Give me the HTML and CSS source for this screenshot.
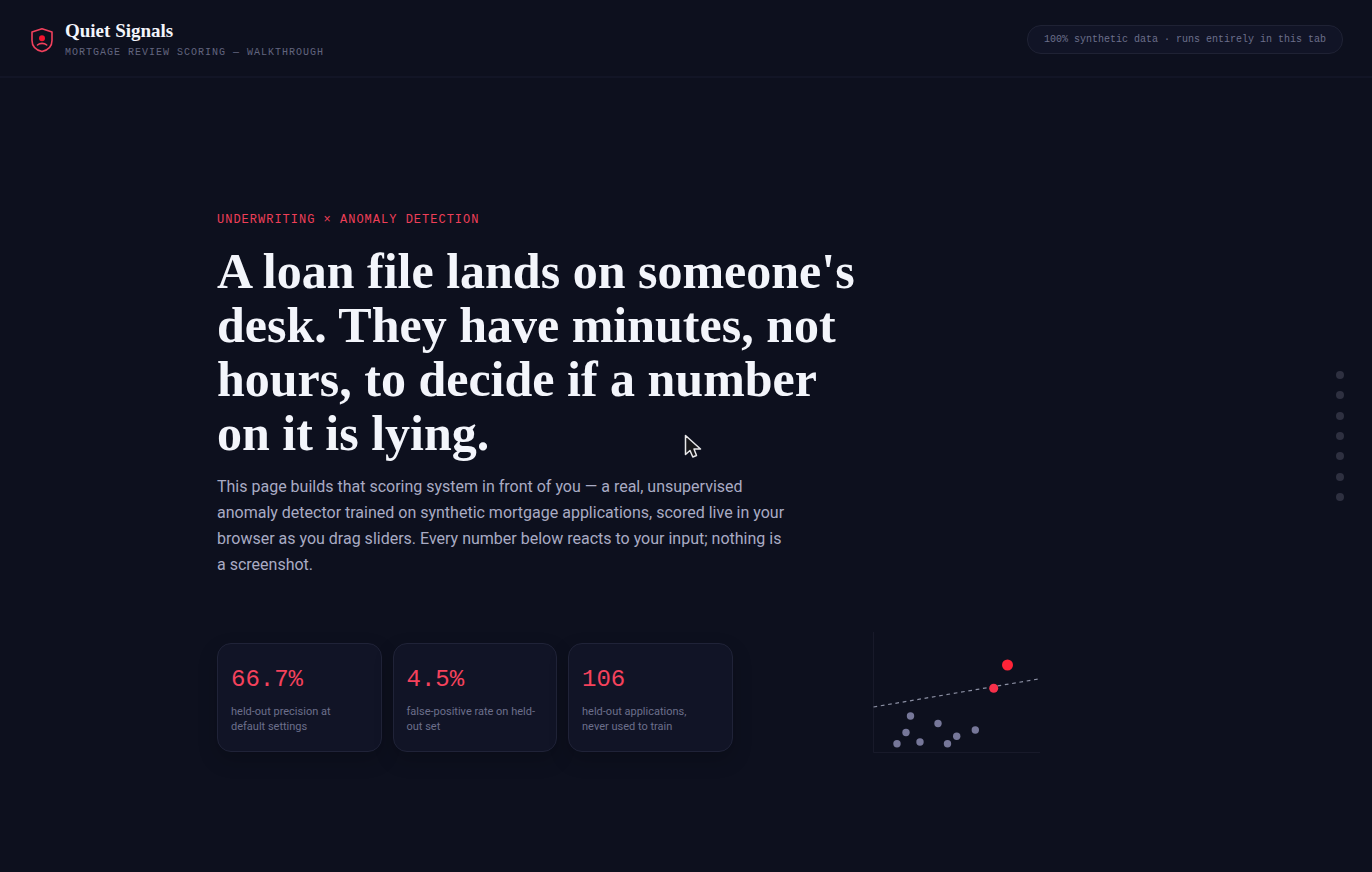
FILE: index.html
```html
<!DOCTYPE html>
<html lang="en">
<head>
<meta charset="utf-8">
<meta name="viewport" content="width=device-width, initial-scale=1">
<title>Quiet Signals</title>
<link rel="stylesheet" href="styles.css">
</head>
<body>
<header class="topbar">
  <div class="brand">
    <svg class="brand-mark" viewBox="0 0 24 26" aria-hidden="true">
      <path d="M12 1.700 22 5V13.500C22 19 18.200 23 12 24.600 5.800 23 2 19 2 13.500V5Z" fill="none" stroke="#f0405c" stroke-width="1.600" stroke-linejoin="round"/>
      <circle cx="12" cy="11.300" r="3" fill="#f5142f"/>
      <path d="M7.500 18C10 15.800 14.200 15.800 16.700 18" fill="none" stroke="#f0405c" stroke-width="1.600" stroke-linecap="round"/>
    </svg>
    <div>
      <div class="brand-name">Quiet Signals</div>
      <div class="brand-sub">MORTGAGE REVIEW SCORING — WALKTHROUGH</div>
    </div>
  </div>
  <div class="pill">100% synthetic data · runs entirely in this tab</div>
</header>
<main class="hero">
  <div class="hero-inner">
    <p class="eyebrow">UNDERWRITING × ANOMALY DETECTION</p>
    <h1 class="title">A loan file lands on someone's desk. They have minutes, not hours, to decide if a number on it is lying.</h1>
    <p class="lede">This page builds that scoring system in front of you — a real, unsupervised anomaly detector trained on synthetic mortgage applications, scored live in your browser as you drag sliders. Every number below reacts to your input; nothing is a screenshot.</p>
    <div class="evidence">
      <div class="stats">
        <div class="stat"><div class="stat-value">66.7%</div><div class="stat-label">held-out precision at default settings</div></div>
        <div class="stat"><div class="stat-value">4.5%</div><div class="stat-label">false-positive rate on held-out set</div></div>
        <div class="stat"><div class="stat-value">106</div><div class="stat-label">held-out applications, never used to train</div></div>
      </div>
      <svg class="scatter" viewBox="0 0 168 122" role="img" aria-label="Scatter plot with two flagged applications">
        <path d="M1.500 0V120.500H168" fill="none" stroke="#181a2a"/>
        <path d="M1.500 75 166.500 47" fill="none" stroke="#8b8fa3" stroke-width="1.200" stroke-dasharray="3.700 3.700"/>
        <g fill="#767799">
          <circle cx="38.500" cy="84" r="3.700"/><circle cx="66" cy="91.500" r="3.700"/>
          <circle cx="34" cy="100.500" r="3.700"/><circle cx="25" cy="111.700" r="3.700"/>
          <circle cx="48" cy="110" r="3.700"/><circle cx="75.500" cy="111.700" r="3.700"/>
          <circle cx="84.700" cy="104.300" r="3.700"/><circle cx="103.300" cy="98" r="3.700"/>
        </g>
        <circle cx="121.700" cy="56.300" r="4.500" fill="#f6304a"/>
        <circle cx="135.500" cy="33" r="5.500" fill="#ff2438"/>
      </svg>
    </div>
  </div>
  <svg class="pointer" viewBox="0 0 18 25" aria-hidden="true">
    <path d="M1.500 1.500V20.500L6 16.500 8.800 23 12.500 21.500 10 15H16.500Z" fill="#17171a" stroke="#e8e8ea" stroke-width="1.500" stroke-linejoin="round"/>
  </svg>
</main>
<nav class="dots" aria-label="Sections">
  <a href="#s1" aria-label="Section 1"></a><a href="#s2" aria-label="Section 2"></a><a href="#s3" aria-label="Section 3"></a><a href="#s4" aria-label="Section 4"></a><a href="#s5" aria-label="Section 5"></a><a href="#s6" aria-label="Section 6"></a><a href="#s7" aria-label="Section 7"></a>
</nav>
</body>
</html>
```
FILE: styles.css
```css
* { box-sizing: border-box; }
body {
  margin: 0;
  min-height: 100vh;
  display: flex;
  flex-direction: column;
  background: #0d101e;
  color: #f3f5fb;
  font-family: Roboto, "Liberation Sans", sans-serif;
}
.topbar {
  display: flex;
  align-items: center;
  justify-content: space-between;
  padding: 19px 29px 16px;
  border-bottom: 2px solid #121526;
}
.brand { display: flex; align-items: center; gap: 10px; }
.brand-mark { width: 26px; height: 26px; }
.brand-name {
  font: bold 19px/24px "Liberation Serif", serif;
}
.brand-sub {
  margin-top: 2px;
  font: 10px/15px "Liberation Mono", monospace;
  letter-spacing: 1px;
  color: #62657f;
}
.pill {
  padding: 6px 16px;
  border: 1px solid #1f2234;
  border-radius: 14px;
  background: #111426;
  font: 10px/15px "Liberation Mono", monospace;
  color: #6c6f8b;
}
.hero {
  position: relative;
  flex: 1;
  display: flex;
  align-items: center;
  justify-content: center;
  padding: 39px 24px 24px;
}
.hero-inner { width: 100%; max-width: 938px; }
.eyebrow {
  margin: 0 0 16px;
  font: 12px/16px "Liberation Mono", monospace;
  letter-spacing: 1px;
  color: #ee3f58;
}
.title {
  margin: 0 0 14px;
  max-width: 660px;
  font: bold 50px/54px "Liberation Serif", serif;
}
.lede {
  margin: 0 0 54px;
  max-width: 568px;
  font-size: 16px;
  line-height: 26px;
  color: #a9abc4;
}
.evidence {
  display: grid;
  grid-template-columns: 22fr 17fr;
  gap: 24px;
  align-items: end;
}
.stats {
  display: grid;
  grid-template-columns: repeat(3, 1fr);
  gap: 11px;
  margin-bottom: 2px;
}
.stat {
  padding: 20px 17px 17px 13px;
  border: 1px solid #202338;
  border-radius: 14px;
  background: #111426;
  box-shadow: 0 8px 20px rgba(0, 0, 0, 0.18);
}
.stat-value {
  margin-bottom: 9px;
  font: 24px/31px "Liberation Mono", monospace;
  color: #f5425c;
}
.stat-label { font-size: 11px; line-height: 15px; color: #6c6f8b; }
.scatter { width: 168px; justify-self: center; }
.pointer {
  position: absolute;
  top: 356px;
  left: 50%;
  margin-left: -2px;
  width: 18px;
  height: 25px;
}
.dots {
  position: fixed;
  right: 28px;
  top: 50%;
  transform: translateY(-50%);
  height: 130px;
  display: flex;
  flex-direction: column;
  justify-content: space-between;
}
.dots a {
  width: 8px;
  height: 8px;
  border-radius: 50%;
  background: #2e3040;
}
```
